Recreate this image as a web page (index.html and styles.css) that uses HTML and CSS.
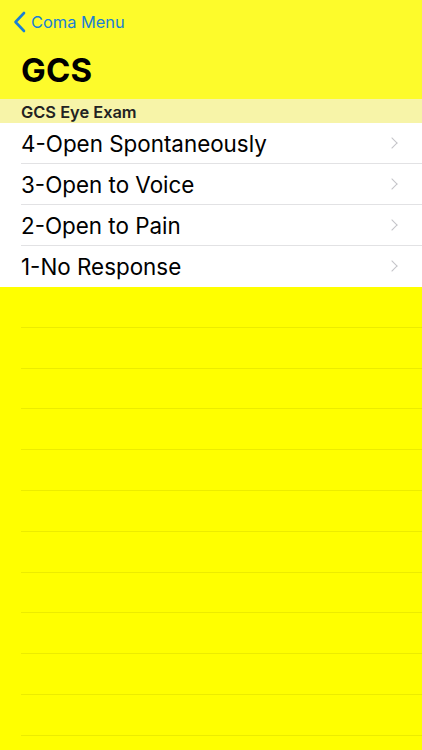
FILE: index.html
```html
<!DOCTYPE html>
<html lang="en">
<head>
  <meta charset="UTF-8" />
  <meta name="viewport" content="width=device-width, initial-scale=1.0"/>
  <title>GCS</title>
  <link rel="stylesheet" href="styles.css">
</head>
<body>

  <header class="navbar">
    <a class="back" href="#">
      <svg class="back-icon" width="13" height="22" viewBox="0 0 13 22">
        <path d="M11 2 L2.5 11 L11 20" fill="none" stroke="#1a7fd4" stroke-width="2.6" stroke-linecap="round" stroke-linejoin="round"/>
      </svg>
      <span>Coma Menu</span>
    </a>
    <h1>GCS</h1>
  </header>

  <div class="section-title">GCS Eye Exam</div>

  <ul class="list">
    <li>4-Open Spontaneously<span class="chev"></span></li>
    <li>3-Open to Voice<span class="chev"></span></li>
    <li>2-Open to Pain<span class="chev"></span></li>
    <li>1-No Response<span class="chev"></span></li>
  </ul>

  <ul class="empty">
    <li></li><li></li><li></li><li></li><li></li>
    <li></li><li></li><li></li><li></li><li></li><li></li><li></li>
  </ul>

</body>
</html>
```

FILE: styles.css
```css
body {
  font-family: Inter, 'Liberation Sans', sans-serif;
  margin: 0;
  padding: 0;
  background: #ffff00;
  color: #000;
  height: 750px;
  overflow: hidden;
}

.navbar {
  background: #fdfb2b;
  height: 99px;
  padding: 0;
}

.back {
  display: flex;
  align-items: center;
  gap: 5px;
  padding: 11px 0 0 13px;
  height: 22px;
  color: #1a7fd4;
  text-decoration: none;
  font-size: 16.4px;
}

.navbar h1 {
  margin: 17px 0 0 21px;
  font-size: 33px;
  font-weight: 700;
  letter-spacing: 0.2px;
}

.section-title {
  background: #f7f4a8;
  height: 24px;
  line-height: 26px;
  padding-left: 21px;
  font-size: 16.4px;
  font-weight: 600;
  color: #222;
}

ul {
  list-style: none;
  margin: 0;
  padding: 0;
}

.list {
  background: white;
}

.list li {
  position: relative;
  height: 41px;
  line-height: 42px;
  margin-left: 21px;
  font-size: 22.4px;
  box-shadow: inset 0 -1px 0 #e2e2e4;
}

.list li:last-child {
  box-shadow: none;
}

.chev {
  position: absolute;
  right: 26px;
  top: 16px;
  width: 7px;
  height: 7px;
  border-top: 1.6px solid #c4c4c8;
  border-right: 1.6px solid #c4c4c8;
  transform: rotate(45deg);
}

.empty li {
  height: 40.8px;
  margin-left: 21px;
  box-shadow: inset 0 -1px 0 #ecec00;
}
```
